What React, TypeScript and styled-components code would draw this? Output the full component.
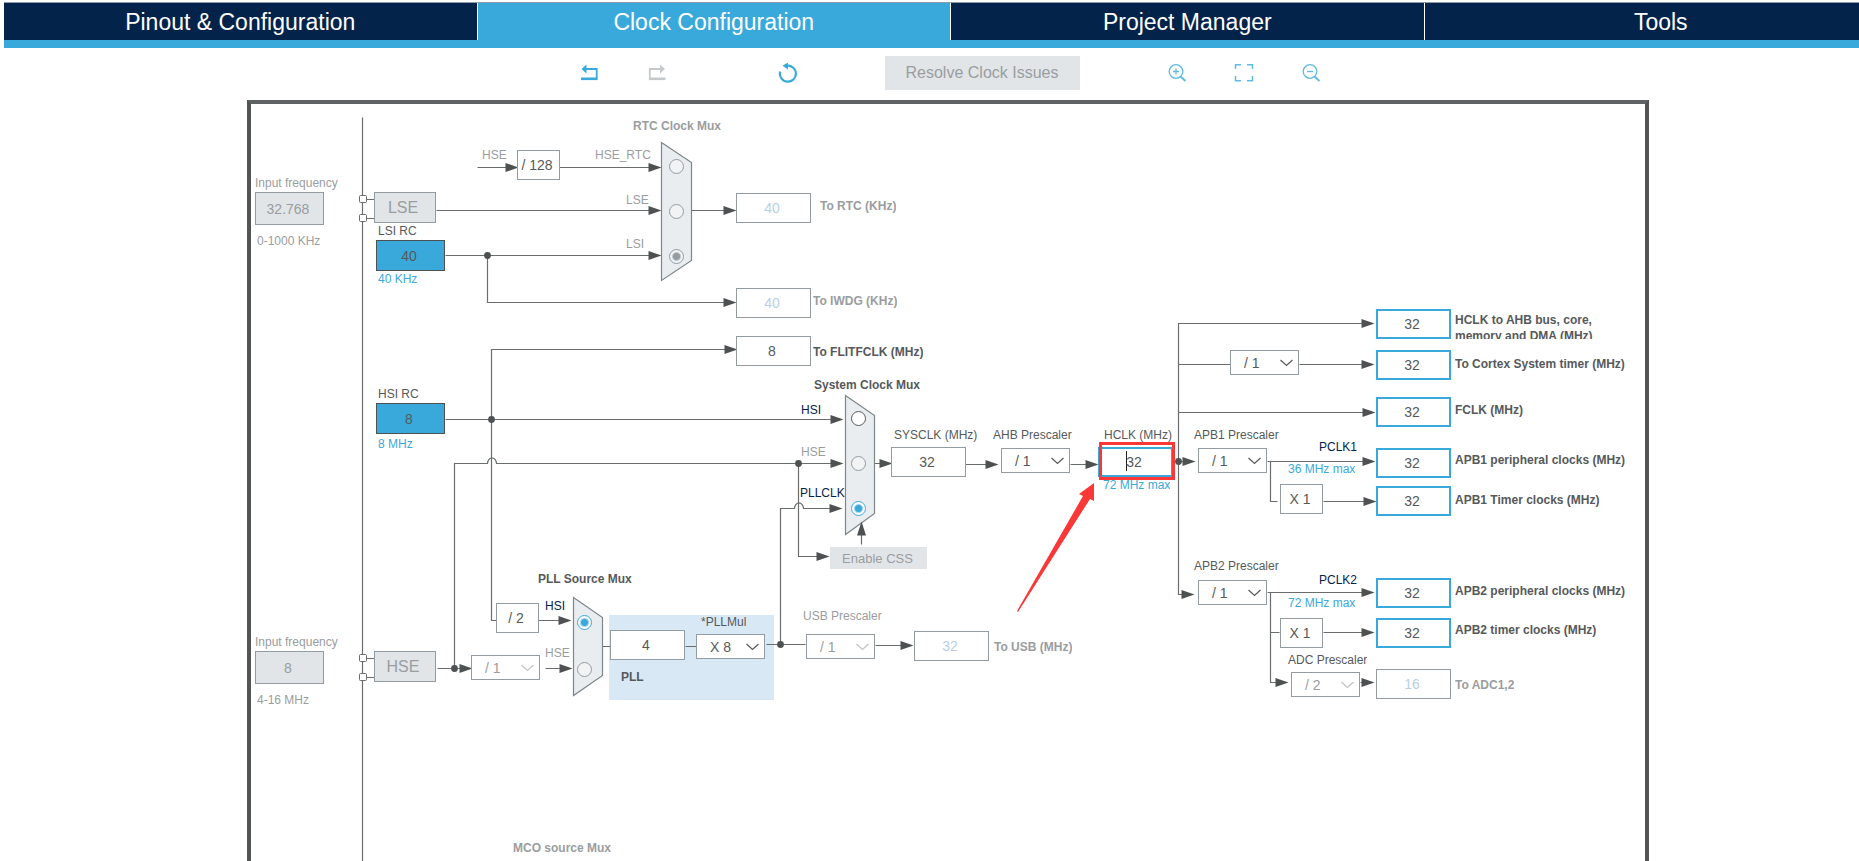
import React from "react";
import styled, { createGlobalStyle, css } from "styled-components";

const color = {
  navy: "#03234b",
  cyan: "#39a9dc",
  ink: "#56595b",
  muted: "#9a9da0",
  pale: "#b9cfe6",
  edge: "#939ca3",
  wire: "#6a6d6e",
  arrow: "#4d5152",
  panel: "#e1e5e8",
  mux: "#e9edf0",
  region: "#d9e8f5",
  alert: "#fb3838",
};

/* Part of the clock tree that the canvas shows, in diagram units. */
const VIEW = { x: 251, y: 104, width: 1394, height: 757 };

const GlobalStyle = createGlobalStyle`
  * { box-sizing: border-box; }
  body {
    margin: 0;
    background: #fff;
    color: ${color.ink};
    font-family: "Liberation Sans", Arial, sans-serif;
  }
  button, input, select { font: inherit; margin: 0; }
`;

const Page = styled.div`
  display: flex;
  flex-direction: column;
  min-height: 100vh;
  overflow: hidden;
`;

const TabBar = styled.nav`
  display: flex;
  gap: 1px;
  margin: 2px -38px 0 4px;
  border-top: 1px solid #8e9bab;
  border-bottom: 8px solid ${color.cyan};
`;

const Tab = styled.button<{ $active?: boolean }>`
  flex: 1;
  height: 37px;
  padding: 2px 0 0;
  border: 0;
  background: ${(p) => (p.$active ? color.cyan : color.navy)};
  color: #fff;
  font-size: 23px;
  line-height: 35px;
`;

const Toolbar = styled.div`
  display: flex;
  align-items: center;
  justify-content: center;
  gap: 87px;
  height: 52px;
  padding: 0 208px 2px 249px;
`;

const ToolGroup = styled.div<{ $gap: number }>`
  display: flex;
  align-items: center;
  gap: ${(p) => p.$gap}px;
`;

const IconButton = styled.button`
  display: block;
  width: 20px;
  height: 20px;
  padding: 0;
  border: 0;
  background: none;
  color: ${color.cyan};
  &:disabled { color: #c6c9cb; }
  svg { display: block; }
`;

const ResolveButton = styled.button`
  width: 195px;
  height: 34px;
  padding: 0;
  border: 0;
  background: ${color.panel};
  color: ${color.muted};
  font-size: 16px;
`;

const Frame = styled.main`
  flex: 1;
  margin: 0 210px 0 247px;
  border: 4px solid #525556;
  border-top-color: #5f6364;
  border-bottom: 0;
`;

const Canvas = styled.div`
  position: relative;
  width: ${VIEW.width}px;
  height: ${VIEW.height}px;
`;

const Drawing = styled.svg`
  position: absolute;
  inset: 0;
  pointer-events: none;
`;

type Place = { $x: number; $y: number };

const placed = css<Place>`
  position: absolute;
  left: ${(p) => p.$x - VIEW.x}px;
  top: ${(p) => p.$y - VIEW.y}px;
`;

const Label = styled.label<Place & { $color?: string; $bold?: boolean }>`
  ${placed}
  max-height: 27px;
  overflow: hidden;
  color: ${(p) => p.$color ?? color.ink};
  font-size: 12px;
  font-weight: ${(p) => (p.$bold ? 700 : 400)};
  line-height: 16px;
  white-space: pre;
`;

type Tone = "plain" | "off" | "source" | "input" | "bus";

const tones: Record<Tone, ReturnType<typeof css>> = {
  plain: css`width: 75px; height: 30px; border: 1px solid ${color.edge}; background: #fff; color: ${color.ink};`,
  off: css`width: 75px; height: 30px; border: 1px solid ${color.edge}; background: #fff; color: ${color.pale};`,
  bus: css`width: 75px; height: 30px; border: 2px solid ${color.cyan}; background: #fff; color: ${color.ink};`,
  source: css`width: 69px; height: 31px; border: 1px solid ${color.arrow}; background: ${color.cyan}; color: ${color.ink};`,
  input: css`width: 69px; height: 33px; border: 1px solid ${color.edge}; background: ${color.panel}; color: ${color.muted};`,
};

const ValueBox = styled.input<Place & { $tone: Tone }>`
  ${placed}
  padding: 0 3px 0 0;
  border-radius: 0;
  outline: 0;
  font-size: 14px;
  text-align: center;
  ${(p) => tones[p.$tone]}
`;

const FactorBox = styled.div<Place>`
  ${placed}
  width: 43px;
  height: 30px;
  padding-right: 3px;
  border: 1px solid ${color.edge};
  background: #fff;
  font-size: 14px;
  line-height: 28px;
  text-align: center;
`;

const SelectWrap = styled.div<Place & { $off?: boolean }>`
  ${placed}
  width: 69px;
  height: 25px;
  color: ${(p) => (p.$off ? color.muted : color.ink)};
  svg {
    position: absolute;
    top: 9px;
    right: 6px;
    opacity: ${(p) => (p.$off ? 0.6 : 1)};
    pointer-events: none;
  }
`;

const Select = styled.select`
  display: block;
  width: 100%;
  height: 100%;
  padding: 0 20px 0 13px;
  border: 1px solid ${color.edge};
  border-radius: 0;
  background: #fff;
  color: inherit;
  font-size: 14px;
  appearance: none;
  &:disabled { opacity: 1; }
`;

const Oscillator = styled.button<Place>`
  ${placed}
  width: 62px;
  height: 31px;
  padding: 0 4px 0 0;
  border: 1px solid ${color.edge};
  background: ${color.panel};
  color: ${color.muted};
  font-size: 16px;
`;

const CssButton = styled.button<Place>`
  ${placed}
  width: 97px;
  height: 22px;
  padding: 0 2px 0 0;
  border: 0;
  background: ${color.panel};
  color: ${color.muted};
  font-size: 13px;
`;

const Radio = styled.input<Place & { $ring: string; $fill: string }>`
  ${placed}
  width: 15px;
  height: 15px;
  margin: 0;
  border: 1px solid ${(p) => p.$ring};
  border-radius: 50%;
  background: ${(p) => p.$fill};
  appearance: none;
  &:checked {
    background: radial-gradient(circle, ${(p) => p.$ring} 3px, ${(p) => p.$fill} 5px);
  }
`;

/* ---------- data ---------- */

type ValueData = {
  id: string; value: string; x: number; y: number; tone: Tone;
  label: string; lx: number; ly: number; bold?: boolean; color?: string;
};

const values: ValueData[] = [
  { id: "lse-in", value: "32.768", x: 255, y: 192, tone: "input", label: "Input frequency", lx: 255, ly: 175, color: color.muted },
  { id: "hse-in", value: "8", x: 255, y: 651, tone: "input", label: "Input frequency", lx: 255, ly: 634, color: color.muted },
  { id: "lsi", value: "40", x: 376, y: 240, tone: "source", label: "LSI RC", lx: 378, ly: 223 },
  { id: "hsi", value: "8", x: 376, y: 403, tone: "source", label: "HSI RC", lx: 378, ly: 386 },
  { id: "rtc", value: "40", x: 736, y: 193, tone: "off", label: "To RTC (KHz)", lx: 820, ly: 198, bold: true, color: color.muted },
  { id: "iwdg", value: "40", x: 736, y: 288, tone: "off", label: "To IWDG (KHz)", lx: 813, ly: 293, bold: true, color: color.muted },
  { id: "flitf", value: "8", x: 736, y: 336, tone: "plain", label: "To FLITFCLK (MHz)", lx: 813, ly: 344, bold: true },
  { id: "sysclk", value: "32", x: 891, y: 447, tone: "plain", label: "SYSCLK (MHz)", lx: 894, ly: 427 },
  { id: "hclk", value: "32", x: 1098, y: 447, tone: "bus", label: "HCLK (MHz)", lx: 1104, ly: 427 },
  { id: "pll-in", value: "4", x: 610, y: 630, tone: "plain", label: "PLL", lx: 621, ly: 669, bold: true },
  { id: "usb", value: "32", x: 914, y: 631, tone: "off", label: "To USB (MHz)", lx: 994, ly: 639, bold: true, color: color.muted },
  { id: "ahb", value: "32", x: 1376, y: 309, tone: "bus", label: "HCLK to AHB bus, core,\nmemory and DMA (MHz)", lx: 1455, ly: 312, bold: true },
  { id: "cortex", value: "32", x: 1376, y: 350, tone: "bus", label: "To Cortex System timer (MHz)", lx: 1455, ly: 356, bold: true },
  { id: "fclk", value: "32", x: 1376, y: 397, tone: "bus", label: "FCLK (MHz)", lx: 1455, ly: 402, bold: true },
  { id: "apb1", value: "32", x: 1376, y: 448, tone: "bus", label: "APB1 peripheral clocks (MHz)", lx: 1455, ly: 452, bold: true },
  { id: "apb1t", value: "32", x: 1376, y: 486, tone: "bus", label: "APB1 Timer clocks (MHz)", lx: 1455, ly: 492, bold: true },
  { id: "apb2", value: "32", x: 1376, y: 578, tone: "bus", label: "APB2 peripheral clocks (MHz)", lx: 1455, ly: 583, bold: true },
  { id: "apb2t", value: "32", x: 1376, y: 618, tone: "bus", label: "APB2 timer clocks (MHz)", lx: 1455, ly: 622, bold: true },
  { id: "adc", value: "16", x: 1376, y: 669, tone: "off", label: "To ADC1,2", lx: 1455, ly: 677, bold: true, color: color.muted },
];

type SelectData = {
  id: string; value: string; x: number; y: number; off?: boolean;
  name: string; label?: [number, number, string?];
};

const selects: SelectData[] = [
  { id: "s-ahb", value: "/ 1", x: 1001, y: 448, name: "AHB Prescaler", label: [993, 427] },
  { id: "s-cortex", value: "/ 1", x: 1230, y: 350, name: "Cortex Prescaler" },
  { id: "s-apb1", value: "/ 1", x: 1198, y: 448, name: "APB1 Prescaler", label: [1194, 427] },
  { id: "s-apb2", value: "/ 1", x: 1198, y: 580, name: "APB2 Prescaler", label: [1194, 558] },
  { id: "s-adc", value: "/ 2", x: 1291, y: 672, off: true, name: "ADC Prescaler", label: [1288, 652] },
  { id: "s-pll", value: "X 8", x: 696, y: 634, name: "*PLLMul", label: [701, 614] },
  { id: "s-usb", value: "/ 1", x: 806, y: 634, off: true, name: "USB Prescaler", label: [803, 608, color.muted] },
  { id: "s-hse", value: "/ 1", x: 471, y: 655, off: true, name: "HSE Prescaler" },
];

const factors: [string, number, number][] = [
  ["/ 128", 517, 150],
  ["/ 2", 496, 603],
  ["X 1", 1280, 484],
  ["X 1", 1280, 618],
];

type Note = { text: string; x: number; y: number; color?: string; bold?: boolean };

const notes: Note[] = [
  { text: "0-1000 KHz", x: 257, y: 233, color: color.muted },
  { text: "4-16 MHz", x: 257, y: 692, color: color.muted },
  { text: "40 KHz", x: 378, y: 271, color: color.cyan },
  { text: "8 MHz", x: 378, y: 436, color: color.cyan },
  { text: "72 MHz max", x: 1103, y: 477, color: color.cyan },
  { text: "36 MHz max", x: 1288, y: 461, color: color.cyan },
  { text: "72 MHz max", x: 1288, y: 595, color: color.cyan },
  { text: "HSE", x: 482, y: 147, color: color.muted },
  { text: "PCLK1", x: 1319, y: 439, color: color.navy },
  { text: "PCLK2", x: 1319, y: 572, color: color.navy },
  { text: "RTC Clock Mux", x: 633, y: 118, color: color.muted, bold: true },
  { text: "System Clock Mux", x: 814, y: 377, bold: true },
  { text: "PLL Source Mux", x: 538, y: 571, bold: true },
  { text: "MCO source Mux", x: 513, y: 840, color: color.muted, bold: true },
];

type RadioData = {
  id: string; group: string; label: string; lx: number; ly: number; x: number; y: number;
  on?: boolean; ring: string; fill: string; color: string;
};

const radios: RadioData[] = [
  { id: "r1", group: "rtc", label: "HSE_RTC", lx: 595, ly: 147, x: 676, y: 166, ring: color.edge, fill: "#f1f3f5", color: color.muted },
  { id: "r2", group: "rtc", label: "LSE", lx: 626, ly: 192, x: 676, y: 211, ring: color.edge, fill: "#f1f3f5", color: color.muted },
  { id: "r3", group: "rtc", label: "LSI", lx: 626, ly: 236, x: 676, y: 256, on: true, ring: color.edge, fill: "#f1f3f5", color: color.muted },
  { id: "r4", group: "sys", label: "HSI", lx: 801, ly: 402, x: 858, y: 418, ring: color.ink, fill: "#fff", color: color.navy },
  { id: "r5", group: "sys", label: "HSE", lx: 801, ly: 444, x: 858, y: 463, ring: color.edge, fill: "#f1f3f5", color: color.muted },
  { id: "r6", group: "sys", label: "PLLCLK", lx: 800, ly: 485, x: 858, y: 508, on: true, ring: color.cyan, fill: "#fff", color: color.navy },
  { id: "r7", group: "pll", label: "HSI", lx: 545, ly: 598, x: 584, y: 622, on: true, ring: color.cyan, fill: "#fff", color: color.navy },
  { id: "r8", group: "pll", label: "HSE", lx: 545, ly: 645, x: 584, y: 669, ring: color.edge, fill: "#f1f3f5", color: color.muted },
];

/* ---------- drawings ---------- */

const wires = [
  "M362 117V861",
  "M366 199H374 M366 218H374 M366 658H374 M366 677H374",
  "M477 167H510 M559 167H650",
  "M436 210H650 M691 210H726",
  "M445 255H650 M487 255V302H726",
  "M445 419H834 M726 349H491V620H496 M538 620H560",
  "M437 668H462 M545 668H560",
  "M454 668V463H487A4 5 0 0 1 496 463H834",
  "M798 463V556H818",
  "M874 463H884 M965 464H988 M1070 464H1087",
  "M602 646H610 M685 646H696 M766 644H805",
  "M780 644V508H794A4 5 0 0 1 803 508H832",
  "M875 645H902 M861 544V530",
  "M1365 323H1178V594H1184 M1175 461H1184",
  "M1178 364H1230 M1299 364H1365 M1178 412H1365",
  "M1267 461H1365 M1270 461V501H1277 M1323 501H1366",
  "M1267 592H1365 M1270 592V682H1276 M1270 632H1279 M1323 632H1365 M1360 682H1364",
];

const arrowTips: [number, number][] = [
  [518, 167], [661, 167], [661, 210], [661, 255], [736, 210], [736, 302], [737, 349],
  [843, 419], [843, 463], [842, 508], [829, 556], [892, 463], [998, 464], [1098, 464],
  [571, 620], [572, 668], [472, 668], [913, 645], [1195, 461], [1194, 594],
  [1374, 323], [1374, 364], [1375, 412], [1375, 461], [1376, 501],
  [1374, 592], [1374, 632], [1288, 682], [1374, 682],
];

const dots: [number, number][] = [
  [487, 255], [491, 419], [454, 668], [798, 463], [780, 644], [1178, 461],
];

const viewBox = `${VIEW.x} ${VIEW.y} ${VIEW.width} ${VIEW.height}`;

const Wiring = () => (
  <Drawing viewBox={viewBox} width={VIEW.width} height={VIEW.height} aria-hidden="true">
    <rect x="609" y="615" width="165" height="85" fill={color.region} />
    <g transform="translate(.5 .5)">
      <path d={wires.join(" ")} fill="none" stroke={color.wire} strokeWidth="1.2" />
      <g fill={color.mux} stroke="#7d868b" strokeWidth="1.2">
        <path d="M661 142L691 162V260L661 280Z" />
        <path d="M845 395L874 415V513L845 534Z" />
        <path d="M573 597L602 617V675L573 695Z" />
      </g>
      <g fill="#fff" stroke={color.wire}>
        {[199, 218, 658, 677].map((y) => (
          <rect key={y} x="359" y={y - 4} width="7" height="7" rx="1" />
        ))}
      </g>
      <g fill={color.arrow}>
        {arrowTips.map(([x, y]) => (
          <path key={`${x}-${y}`} d={`M${x} ${y}l-13 -4.5v9z`} />
        ))}
        <path d="M861 521l-4.5 14h9z" />
        {dots.map(([x, y]) => (
          <circle key={`${x}-${y}`} cx={x} cy={y} r="3.4" />
        ))}
      </g>
    </g>
  </Drawing>
);

const Annotation = () => (
  <Drawing viewBox={viewBox} width={VIEW.width} height={VIEW.height} aria-hidden="true">
    <rect x="1100.5" y="443.5" width="73" height="35" fill="none" stroke={color.alert} strokeWidth="3" />
    <path d="M1094 483L1079 494L1083 496L1017 611L1018 612L1090 499L1094 501Z" fill={color.alert} />
    <path d="M1126.5 451V471" stroke="#222" />
  </Drawing>
);

const Icon = ({ children }: { children: React.ReactNode }) => (
  <svg width="20" height="20" viewBox="0 0 20 20" fill="none" stroke="currentColor" strokeWidth="1.5">
    {children}
  </svg>
);

const UndoArrow = () => (
  <Icon>
    <path d="M4 6H16.7V15" strokeWidth="1.8" />
    <path d="M1 15.8H17.6" strokeWidth="2.6" />
    <path d="M1.500 6L6.500 1.500V10.500Z" fill="currentColor" stroke="none" />
  </Icon>
);

const RedoArrow = () => (
  <Icon>
    <path d="M15 6H2.8V15" strokeWidth="1.8" />
    <path d="M1.9 15.8H18.500" strokeWidth="2.6" />
    <path d="M18 6L13 1.500V10.500Z" fill="currentColor" stroke="none" />
  </Icon>
);

const ResetArrow = () => (
  <Icon>
    <path d="M8.500 2.800A8 8 0 1 1 2.200 8.500" strokeWidth="2.200" />
    <path d="M4.500 2.800L10 -.5V6.500Z" fill="currentColor" stroke="none" />
  </Icon>
);

const Magnifier = ({ plus }: { plus?: boolean }) => (
  <Icon>
    <g strokeWidth="1.300" opacity=".8">
      <circle cx="9" cy="8.500" r="6.800" />
      <path d="M13.500 13.500L18.500 18" strokeWidth="1.800" />
      <path d={plus ? "M6 8.500H12M9 5.500V11.500" : "M6 8.500H12"} />
    </g>
  </Icon>
);

const FitCorners = () => (
  <Icon>
    <path opacity=".8" d="M1.500 6V1.800H7M13 1.800H18.500V6M18.500 13V17.800H13M7 17.800H1.500V13" />
  </Icon>
);

const Prescaler = ({ data }: { data: SelectData }) => (
  <>
    {data.label && (
      <Label htmlFor={data.id} $x={data.label[0]} $y={data.label[1]} $color={data.label[2]}>
        {data.name}
      </Label>
    )}
    <SelectWrap $x={data.x} $y={data.y} $off={data.off}>
      <Select id={data.id} aria-label={data.name} disabled={data.off} defaultValue={data.value}>
        <option>{data.value}</option>
      </Select>
      <svg width="13" height="8" viewBox="0 0 13 8" fill="none" stroke="currentColor" strokeWidth="1.200">
        <path d="M.5 1L6.500 6.500L12.500 1" />
      </svg>
    </SelectWrap>
  </>
);

export default function App() {
  return (
    <Page>
      <GlobalStyle />
      <TabBar>
        <Tab>Pinout &amp; Configuration</Tab>
        <Tab $active>Clock Configuration</Tab>
        <Tab>Project Manager</Tab>
        <Tab>Tools</Tab>
      </TabBar>
      <Toolbar>
        <ToolGroup $gap={111}>
          <ToolGroup $gap={47}>
            <IconButton aria-label="Undo"><UndoArrow /></IconButton>
            <IconButton aria-label="Redo" disabled><RedoArrow /></IconButton>
          </ToolGroup>
          <IconButton aria-label="Reset"><ResetArrow /></IconButton>
        </ToolGroup>
        <ResolveButton disabled>Resolve Clock Issues</ResolveButton>
        <ToolGroup $gap={47}>
          <IconButton aria-label="Zoom in"><Magnifier plus /></IconButton>
          <IconButton aria-label="Fit to window"><FitCorners /></IconButton>
          <IconButton aria-label="Zoom out"><Magnifier /></IconButton>
        </ToolGroup>
      </Toolbar>
      <Frame>
        <Canvas>
          <Wiring />
          {notes.map((n) => (
            <Label as="span" key={`${n.x}-${n.y}`} $x={n.x} $y={n.y} $color={n.color} $bold={n.bold}>
              {n.text}
            </Label>
          ))}
          {values.map((v) => (
            <React.Fragment key={v.id}>
              <Label htmlFor={v.id} $x={v.lx} $y={v.ly} $color={v.color} $bold={v.bold}>
                {v.label}
              </Label>
              <ValueBox id={v.id} $x={v.x} $y={v.y} $tone={v.tone} defaultValue={v.value} />
            </React.Fragment>
          ))}
          {selects.map((s) => (
            <Prescaler key={s.id} data={s} />
          ))}
          {factors.map(([text, x, y]) => (
            <FactorBox key={`${x}-${y}`} $x={x} $y={y}>{text}</FactorBox>
          ))}
          {radios.map((r) => (
            <React.Fragment key={r.id}>
              <Label htmlFor={r.id} $x={r.lx} $y={r.ly} $color={r.color}>{r.label}</Label>
              <Radio
                type="radio" id={r.id} name={r.group} defaultChecked={r.on}
                $x={r.x - 7} $y={r.y - 7} $ring={r.ring} $fill={r.fill}
              />
            </React.Fragment>
          ))}
          <Oscillator $x={374} $y={192}>LSE</Oscillator>
          <Oscillator $x={374} $y={651}>HSE</Oscillator>
          <CssButton $x={830} $y={547} disabled>Enable CSS</CssButton>
          <Annotation />
        </Canvas>
      </Frame>
    </Page>
  );
}
